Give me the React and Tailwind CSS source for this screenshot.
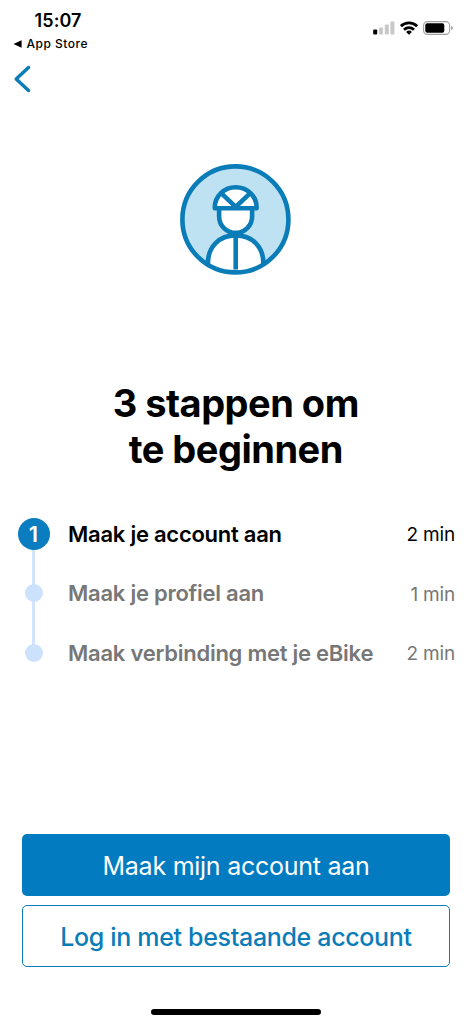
import React from 'react';
import clsx from 'clsx';

const steps = [
  { id: 1, label: 'Maak je account aan', duration: '2 min' },
  { id: 2, label: 'Maak je profiel aan', duration: '1 min' },
  { id: 3, label: 'Maak verbinding met je eBike', duration: '2 min' },
];

function StatusBar() {
  return (
    <header className="flex h-[54px] justify-between pt-[10px]">
      <div className="pl-[13px]">
        <div className="pl-[21.5px] text-[18px] leading-[22px] font-semibold tracking-[0.1px]">15:07</div>
        <div className="mt-[4px] flex items-center gap-[4.5px] text-[12px] leading-4 font-medium tracking-[0.5px]">
          <svg width="9" height="8" viewBox="0 0 9 8">
            <path d="M0.5 4 L8.6 0.2 V7.8 Z" fill="#000" />
          </svg>
          App Store
        </div>
      </div>
      <div className="flex h-[36px] items-center gap-[5px] pr-[20px]">
        <svg width="22" height="14" viewBox="0 0 22 14">
          <rect x="0.2" y="8.5" width="4" height="5" rx="1" fill="#000" />
          <rect x="6" y="6.5" width="4" height="7" rx="1" fill="#c8c8c8" />
          <rect x="11.8" y="3.5" width="4" height="10" rx="1" fill="#c8c8c8" />
          <rect x="17.4" y="0.5" width="4" height="13" rx="1" fill="#c8c8c8" />
        </svg>
        <svg width="18" height="14" viewBox="0 0 18 14" fill="none" stroke="#000" strokeWidth="2.8">
          <path d="M0.9 5.2 A11.6 11.6 0 0 1 17.1 5.2" />
          <path d="M4 8.7 A7.2 7.2 0 0 1 14 8.7" />
          <path d="M9 13.7 L6.1 10.9 A4.2 4.2 0 0 1 11.9 10.9 Z" fill="#000" stroke="none" />
        </svg>
        <svg width="30" height="14" viewBox="0 0 30 14">
          <rect x="0.6" y="0.6" width="26" height="12.8" rx="3.8" fill="none" stroke="#a0a0a0" strokeWidth="1.1" />
          <rect x="2.3" y="2.3" width="19" height="9.4" rx="2" fill="#000" />
          <path d="M28.2 4.8 Q29.8 5.6 29.8 7 Q29.8 8.4 28.2 9.2 Z" fill="#999" />
        </svg>
      </div>
    </header>
  );
}

function CyclistIcon() {
  return (
    <svg width="112" height="112" viewBox="-0.4 -0.4 112 112" fill="none" stroke="#0a7cb8" strokeWidth="4.6">
      <defs>
        <clipPath id="badge">
          <circle cx="56" cy="56" r="53" />
        </clipPath>
      </defs>
      <circle cx="56" cy="56" r="53" fill="#bfe2f2" stroke="none" />
      <g clipPath="url(#badge)">
        {/* Torso */}
        <path d="M28.5 112 V100 C28.5 83 40 72 56.3 72 C72.6 72 84 83 84 100 V112 Z" fill="#fff" />
        <path d="M56.3 72 V106" />
        {/* Head */}
        <path d="M39.7 44 V53 A16.5 16.5 0 0 0 72.7 53 V44 Z" fill="#fff" />
        {/* Helmet */}
        <path d="M35.4 44.9 V43.8 A20.9 20 0 0 1 77.2 43.8 V44.9 Z" fill="#fff" strokeLinejoin="round" />
        <path d="M41.5 29.5 L56.3 43.5 L71.1 29.5" />
      </g>
      <circle cx="56" cy="56" r="53" />
    </svg>
  );
}

function StepList() {
  return (
    <ol className="relative mt-[32px] pr-[18px] pl-[17.5px]">
      {/* Connector behind the markers */}
      <span className="absolute top-[29px] left-[32px] h-[120px] w-[3px] bg-[#d2e4fc]" />
      {steps.map((step, index) => (
        <li
          key={step.id}
          className={clsx('flex h-[59.5px] items-center', index === 0 ? 'text-black' : 'text-[#777]')}
        >
          <span className="relative flex w-8 justify-center">
            {index === 0 ? (
              <span className="flex size-8 items-center justify-center rounded-full bg-[#0a7cc0] pt-px text-[22px] font-semibold text-white">
                {step.id}
              </span>
            ) : (
              <span className="size-[18px] rounded-full bg-[#cce1fc]" />
            )}
          </span>
          <span className="ml-[18.5px] flex-1 pt-px text-[22px] font-semibold tracking-[-0.25px] whitespace-nowrap">
            {step.label}
          </span>
          <span className="pt-[3px] text-[19px] tracking-[-0.2px] whitespace-nowrap">{step.duration}</span>
        </li>
      ))}
    </ol>
  );
}

function App() {
  return (
    <div className="flex h-screen w-full flex-col overflow-hidden bg-white font-['Inter',sans-serif] text-black">
      <StatusBar />
      <nav className="flex h-[50px] items-center pl-[13px]">
        <button aria-label="Terug">
          <svg width="18" height="28" viewBox="0 0 18 28" fill="none">
            <path d="M15.5 2.5 L3.2 14 L15.5 25.5" stroke="#0a7cb8" strokeWidth="3.4" strokeLinecap="round" strokeLinejoin="round" />
          </svg>
        </button>
      </nav>

      <main className="flex flex-1 flex-col">
        <div className="mt-[59px] flex justify-center pr-[3px]">
          <CyclistIcon />
        </div>
        <h1 className="mt-[105px] pr-[1.5px] text-center text-[38px] leading-[46px] font-bold tracking-[-0.5px]">
          3 stappen om
          <br />
          te beginnen
        </h1>
        <StepList />
      </main>

      <footer className="flex flex-col items-center pr-[23px] pl-[22px]">
        <button className="h-[62px] w-full rounded-[5px] bg-[#027bc1] pt-[3px] text-[25px] tracking-[-0.26px] text-white">
          Maak mijn account aan
        </button>
        <button className="mt-[9px] h-[62px] w-full rounded-[5px] border border-[#0a7cb8] pt-[3px] text-[25px] font-medium tracking-[-0.33px] text-[#0a7cb8]">
          Log in met bestaande account
        </button>
        <div className="mt-[42px] mb-[9px] h-[6px] w-[170px] rounded-full bg-black" />
      </footer>
    </div>
  );
}

export default App;
